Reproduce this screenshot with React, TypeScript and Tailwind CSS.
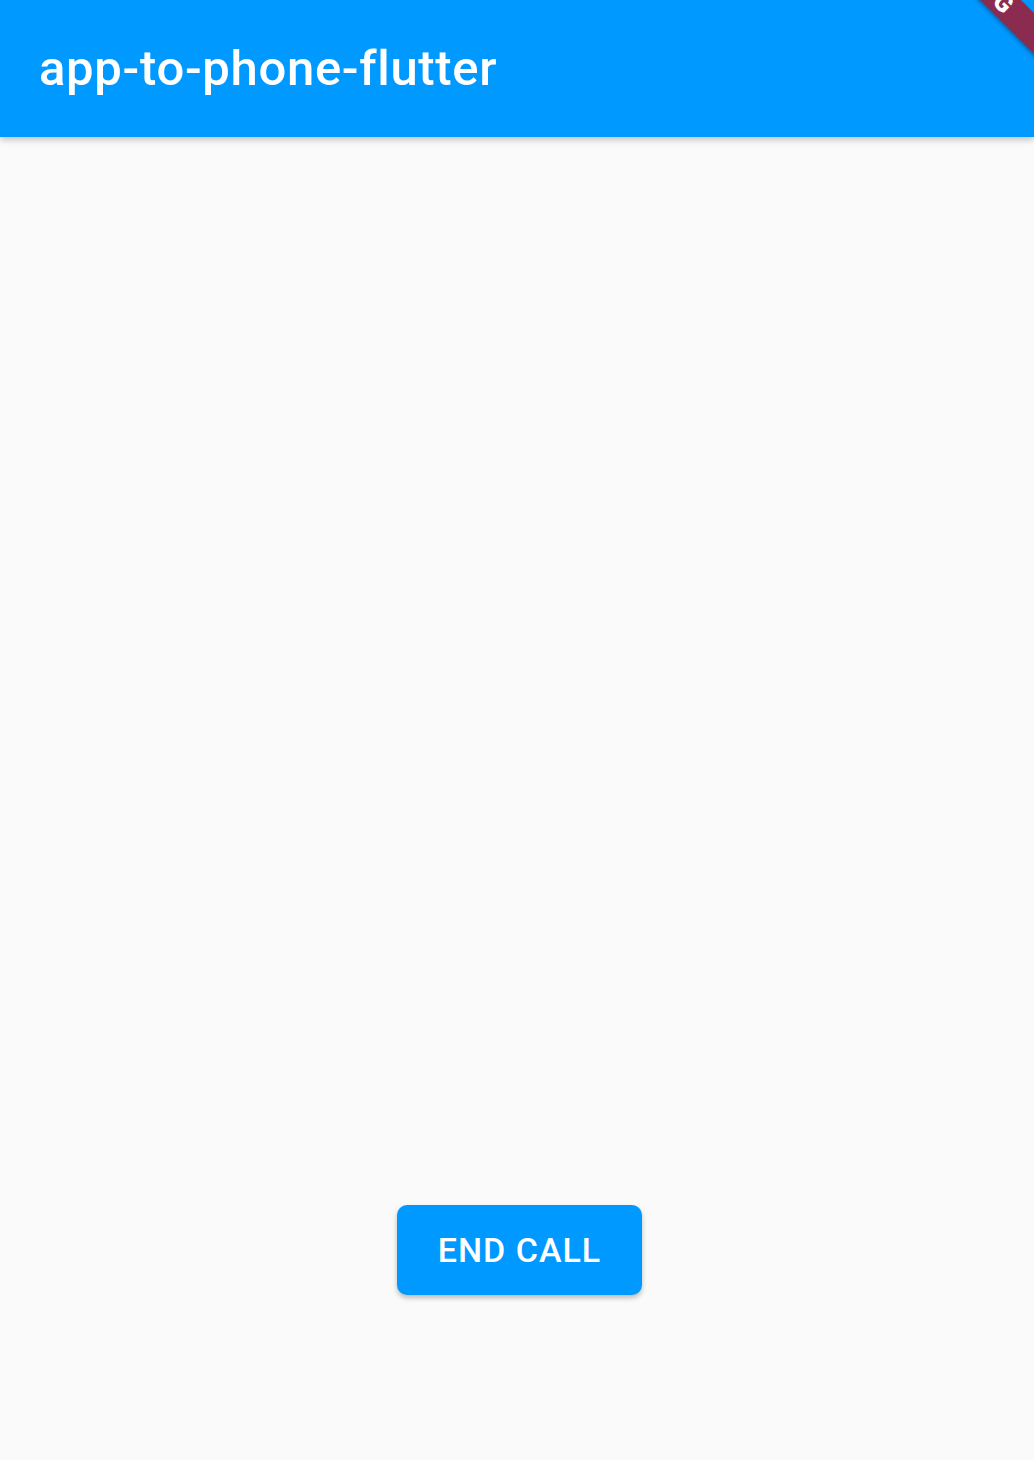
export default function App() {
  return (
    <div
      className="relative flex min-h-[1460px] flex-col bg-[#fafafa]"
      style={{ fontFamily: 'Roboto, "Noto Sans", sans-serif' }}
    >
      {/* App bar */}
      <header className="relative z-10 flex h-[137px] items-center bg-[#0099ff] px-[39px] shadow-[0_3px_6px_rgba(0,0,0,0.22)]">
        <h1 className="text-[49px] font-medium leading-none tracking-[0.7px] text-white">
          app-to-phone-flutter
        </h1>
      </header>

      {/* Body */}
      <main className="flex flex-1 flex-col items-center justify-end pb-[165px]">
        <button
          type="button"
          className="ml-[5px] flex h-[90px] min-w-[245px] items-center justify-center rounded-[10px] bg-[#0099ff] px-[39px] text-[34px] font-medium tracking-[1px] text-white shadow-[0_3px_5px_rgba(0,0,0,0.25)]"
        >
          END CALL
        </button>
      </main>

      {/* Debug banner */}
      <div className="pointer-events-none absolute right-0 top-0 z-20 h-[120px] w-[120px] overflow-hidden">
        <div className="absolute left-[-54px] top-[-35px] flex h-[29px] w-[240px] rotate-45 items-center justify-center bg-[#8a2b4f] shadow-[0_2px_4px_rgba(0,0,0,0.3)]">
          <span className="text-[25px] font-black leading-none tracking-[1px] text-white">DEBUG</span>
        </div>
      </div>
    </div>
  );
}
